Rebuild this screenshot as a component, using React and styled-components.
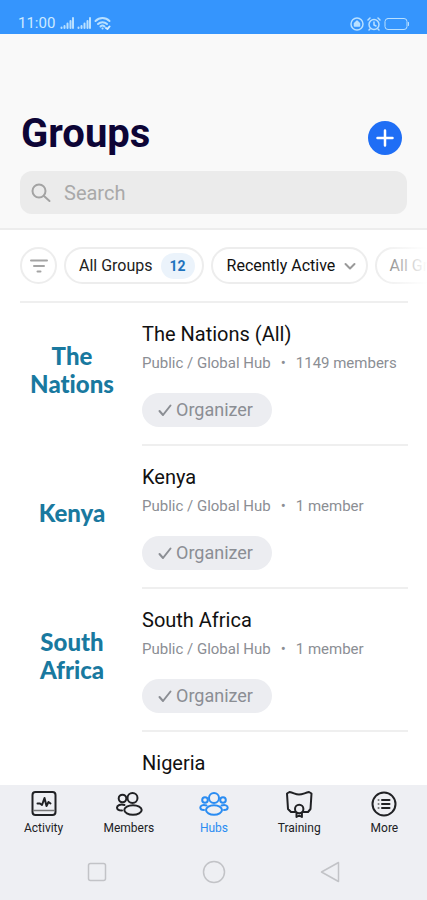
import { useState } from "react";
import styled, { createGlobalStyle } from "styled-components";

const GlobalStyle = createGlobalStyle`
* {
  box-sizing: border-box;
}
body {
  margin: 0;
  background: #fff;
  font-family: Roboto, "Liberation Sans", sans-serif;
}
button, input, select {
  font-family: inherit;
  margin: 0;
}
`;

const Screen = styled.div`
display: flex;
flex-direction: column;
height: 100vh;
overflow: hidden;
`;

const StatusBar = styled.div`
display: flex;
flex: none;
align-items: flex-end;
justify-content: space-between;
height: 34px;
padding: 0 18px 3px;
background: #3595fd;
color: #b9e0ff;
`;

const StatusGroup = styled.div`
display: flex;
align-items: center;
gap: 3px;
`;

const Time = styled.span`
color: #cdeaff;
font-size: 15px;
line-height: 16px;
margin-right: 2px;
`;

const Header = styled.header`
flex: none;
padding: 78px 20px 14px;
background: #f9f9f9;
border-bottom: 2px solid #ededed;
`;

const TitleRow = styled.div`
display: flex;
align-items: center;
justify-content: space-between;
padding: 0 5px 15px 1px;
`;

const Title = styled.h1`
margin: 0;
color: #0d0536;
font-size: 40px;
line-height: 44px;
font-weight: 700;
`;

const AddButton = styled.button`
display: flex;
align-items: center;
justify-content: center;
width: 34px;
height: 34px;
margin-top: 8px;
padding: 0;
border: none;
border-radius: 50%;
background: #1f6ef5;
color: #fff;
`;

const SearchBox = styled.label`
display: flex;
align-items: center;
gap: 13px;
height: 43px;
padding: 0 11px;
border-radius: 12px;
background: #ebebeb;
color: #a3a3a3;
`;

const SearchInput = styled.input`
flex: 1;
min-width: 0;
padding: 0;
border: none;
outline: none;
background: transparent;
color: #333;
font-size: 20px;
line-height: 24px;
&::placeholder {
  color: #a9a9a9;
  opacity: 1;
}
`;

const Content = styled.main`
flex: 1;
min-height: 0;
padding: 0 19px 0 20px;
overflow: hidden;
`;

const Filters = styled.div`
position: relative;
display: flex;
gap: 7px;
margin-right: -19px;
padding: 17px 0;
overflow: hidden;
`;

const Fade = styled.div`
position: absolute;
top: 0;
right: 0;
bottom: 0;
width: 52px;
background: linear-gradient(to right, rgba(255, 255, 255, 0), #fff);
pointer-events: none;
`;

const RoundButton = styled.button`
display: flex;
flex: none;
align-items: center;
justify-content: center;
width: 37px;
height: 37px;
padding: 0;
border: 2px solid #ededed;
border-radius: 50%;
background: #fff;
color: #a4a4a4;
`;

const Chip = styled.button`
display: flex;
flex: none;
align-items: center;
gap: 8px;
height: 37px;
padding: 0 7px 0 13px;
border: 2px solid #ededed;
border-radius: 19px;
background: #fff;
color: ${(props) => (props.$muted ? "#666" : "#222")};
font-size: 16px;
line-height: 20px;
`;

const Count = styled.span`
width: 34px;
border-radius: 13px;
background: #ebf3fb;
color: #1f73bd;
font-size: 14px;
line-height: 26px;
font-weight: 700;
text-align: center;
`;

const SelectChip = styled.div`
display: flex;
flex: none;
align-items: center;
height: 37px;
padding: 0 10px 0 14px;
border: 2px solid #ededed;
border-radius: 19px;
color: #999;
`;

const Select = styled.select`
appearance: none;
padding: 0;
border: none;
outline: none;
background: transparent;
color: #111;
font-size: 16px;
line-height: 20px;
margin-right: 8px;
`;

const GroupList = styled.ul`
margin: 0;
padding: 0;
border-top: 2px solid #efefef;
list-style: none;
`;

const Group = styled.li`
display: grid;
grid-template-columns: 104px 1fr;
column-gap: 18px;
`;

const Logo = styled.div`
display: flex;
align-items: center;
justify-content: center;
padding-bottom: 10px;
color: #19799f;
font-family: Lato, "Open Sans", sans-serif;
font-size: 24px;
line-height: 28px;
font-weight: 900;
font-variant-ligatures: none;
text-align: center;
`;

const Details = styled.div`
min-width: 0;
padding: 19px 0 17px;
border-bottom: 2px solid #efefef;
`;

const Name = styled.h2`
margin: 0;
color: #111;
font-size: 20px;
line-height: 24px;
font-weight: 400;
`;

const Meta = styled.p`
display: flex;
gap: 10px;
margin: 6px 0 19px;
color: #8b8e94;
font-size: 15px;
line-height: 22px;
white-space: nowrap;
`;

const Role = styled.button`
display: flex;
align-items: center;
gap: 3px;
height: 34px;
padding: 0 19px 0 15px;
border: none;
border-radius: 17px;
background: #ecedf1;
color: #8b8e94;
font-size: 18px;
line-height: 22px;
`;

const Footer = styled.footer`
flex: none;
background: #eeeff3;
`;

const Tabs = styled.nav`
display: grid;
grid-template-columns: repeat(5, 1fr);
padding: 5px 0 0 1px;
`;

const Tab = styled.a`
display: flex;
flex-direction: column;
align-items: center;
gap: 3px;
color: ${(props) => (props.$active ? "#2a8cf2" : "#202124")};
font-size: 12px;
line-height: 14px;
text-decoration: none;
`;

const SystemNav = styled.div`
display: flex;
justify-content: center;
gap: 87px;
padding: 22px 0 13px;
`;

const SystemButton = styled.button`
display: flex;
padding: 0;
border: none;
background: transparent;
color: #c2c3c7;
`;

const Icon = ({ size = 28, width = size, stroke = 2, children }) => (
  <svg
    width={width}
    height={size}
    viewBox={`0 0 ${width} ${size}`}
    fill="none"
    stroke="currentColor"
    strokeWidth={stroke}
    strokeLinecap="round"
    strokeLinejoin="round"
    aria-hidden="true"
  >
    {children}
  </svg>
);

const Signal = () => (
  <Icon size={12} width={14}>
    <path d="M1.5 10.5v.5M4.5 9v2M7.5 6.5V11M10.5 4v7M13 1v10" />
  </Icon>
);

const Check = () => (
  <Icon size={16}>
    <path d="M2.5 9l3.500 4L13.500 3.500" />
  </Icon>
);

const Chevron = () => (
  <Icon size={12}>
    <path d="M1.500 4L6 8.500 10.500 4" />
  </Icon>
);

const icons = {
  activity: (
    <Icon>
      <rect x="2.5" y="2" width="23" height="23" rx="3" />
      <path d="M3.500 20.500h21" stroke="#777" strokeWidth="1.500" />
      <path d="M7.500 13.500h2.500l2 1.500 2.500-7 2 8 2-4 2 1.500" />
    </Icon>
  ),
  members: (
    <Icon>
      <circle cx="17.500" cy="8" r="5" />
      <circle cx="7.500" cy="8.500" r="3.800" />
      <ellipse cx="18" cy="20" rx="8.700" ry="4.800" />
      <path d="M9.500 15c-4-1.200-7.500.3-7.500 2.500 0 1.900 2 3 5 3" />
    </Icon>
  ),
  hubs: (
    <Icon width={30}>
      <circle cx="15" cy="8" r="5" />
      <ellipse cx="15" cy="20" rx="8" ry="4.800" />
      <circle cx="6" cy="10" r="2.800" />
      <circle cx="24" cy="10" r="2.800" />
      <path d="M7.500 15.500c-3.500-1-6.200 0-6.200 1.900 0 1.500 1.500 2.500 3.700 2.500M22.500 15.500c3.500-1 6.200 0 6.200 1.900 0 1.500-1.500 2.500-3.700 2.500" />
    </Icon>
  ),
  training: (
    <Icon>
      <path d="M10 22H6l-3-3L2 3.500 4.500 2C9 3 10.500 4.500 14 4.500S19.500 3 24 2L26.500 3.500 25.500 19l-2.500 3H18.500" />
      <circle cx="14.200" cy="19" r="4.200" />
      <path d="M11.500 22.500v4.500l2.700-1.500 2.700 1.500v-4.500" />
    </Icon>
  ),
  more: (
    <Icon>
      <circle cx="14" cy="14" r="11.500" />
      <path d="M12 10h7.500M12 14h7.500M12 18h7.500" />
      <path d="M8.500 10h.1M8.500 14h.1M8.500 18h.1" stroke="#777" />
    </Icon>
  ),
};

const tabs = [
  { id: "activity", label: "Activity" },
  { id: "members", label: "Members" },
  { id: "hubs", label: "Hubs" },
  { id: "training", label: "Training" },
  { id: "more", label: "More" },
];

const groups = [
  { name: "The Nations (All)", logo: "The Nations", members: "1149 members" },
  { name: "Kenya", logo: "Kenya", members: "1 member" },
  { name: "South Africa", logo: "South Africa", members: "1 member" },
  { name: "Nigeria" },
];

const GroupItem = ({ group }) => (
  <Group>
    <Logo>{group.logo}</Logo>
    <Details>
      <Name>{group.name}</Name>
      {group.members && (
        <>
          <Meta>
            <span>Public / Global Hub</span>
            <span>•</span>
            <span>{group.members}</span>
          </Meta>
          <Role>
            <Check />
            Organizer
          </Role>
        </>
      )}
    </Details>
  </Group>
);

const App = () => {
  const [search, setSearch] = useState("");
  const [active, setActive] = useState("hubs");

  return (
    <Screen>
      <GlobalStyle />
      <StatusBar>
        <StatusGroup>
          <Time>11:00</Time>
          <Signal />
          <Signal />
          <Icon size={14} width={17}>
            <path d="M1.500 5c4-4 10-4 14 0M4 8c2.500-2.500 6.500-2.500 9 0M6.500 10.500c1.200-1.200 2.800-1.200 4 0M8.500 12.500h.1" />
            <path d="M12 12l1.500 1 2-2.500" stroke="#d6edff" />
          </Icon>
        </StatusGroup>
        <StatusGroup>
          <Icon size={14} stroke={1.5}>
            <circle cx="7" cy="7" r="6" />
            <path d="M4.500 9V6.500L7 4l2.500 2.500V9z" fill="currentColor" />
          </Icon>
          <Icon size={14} stroke={1.5}>
            <circle cx="7" cy="7.500" r="5" />
            <path d="M7 5v3l2 1M1 3l2-2M13 3l-2-2M3 12l-1 1M11 12l1 1" />
          </Icon>
          <Icon size={14} width={25} stroke={1}>
            <rect x="1" y="1.500" width="22" height="11" rx="3" />
            <path d="M24.500 5.500v3" />
          </Icon>
        </StatusGroup>
      </StatusBar>

      <Header>
        <TitleRow>
          <Title>Groups</Title>
          <AddButton aria-label="Add group">
            <Icon size={20}>
              <path d="M10 2.500v15M2.500 10h15" strokeWidth="2.500" />
            </Icon>
          </AddButton>
        </TitleRow>
        <SearchBox>
          <Icon size={20}>
            <circle cx="8" cy="8" r="6.500" />
            <path d="M13 13l5.500 5" />
          </Icon>
          <SearchInput
            aria-label="Search"
            placeholder="Search"
            value={search}
            onChange={(e) => setSearch(e.target.value)}
          />
        </SearchBox>
      </Header>

      <Content>
        <Filters>
          <RoundButton aria-label="Filter">
            <Icon size={18}>
              <path d="M1 3.500h16M4 9h10M7.500 14.500h3" />
            </Icon>
          </RoundButton>
          <Chip>
            All Groups <Count>12</Count>
          </Chip>
          <SelectChip>
            <Select aria-label="Sort groups" defaultValue="recent">
              <option value="recent">Recently Active</option>
            </Select>
            <Chevron />
          </SelectChip>
          <Chip $muted>All Groups</Chip>
          <Fade />
        </Filters>
        <GroupList>
          {groups.map((group) => (
            <GroupItem key={group.name} group={group} />
          ))}
        </GroupList>
      </Content>

      <Footer>
        <Tabs>
          {tabs.map((tab) => (
            <Tab
              key={tab.id}
              href={`#${tab.id}`}
              $active={tab.id === active}
              onClick={() => setActive(tab.id)}
            >
              {icons[tab.id]}
              {tab.label}
            </Tab>
          ))}
        </Tabs>
        <SystemNav>
          <SystemButton aria-label="Recent apps">
            <Icon size={30} stroke={1.5}>
              <rect x="6.500" y="6.500" width="17" height="17" rx="2" />
            </Icon>
          </SystemButton>
          <SystemButton aria-label="Home">
            <Icon size={30} stroke={1.5}>
              <circle cx="15" cy="15" r="10.500" />
            </Icon>
          </SystemButton>
          <SystemButton aria-label="Back">
            <Icon size={30} stroke={1.5}>
              <path d="M22.500 5.500v19L5.500 15z" />
            </Icon>
          </SystemButton>
        </SystemNav>
      </Footer>
    </Screen>
  );
};

export default App;
